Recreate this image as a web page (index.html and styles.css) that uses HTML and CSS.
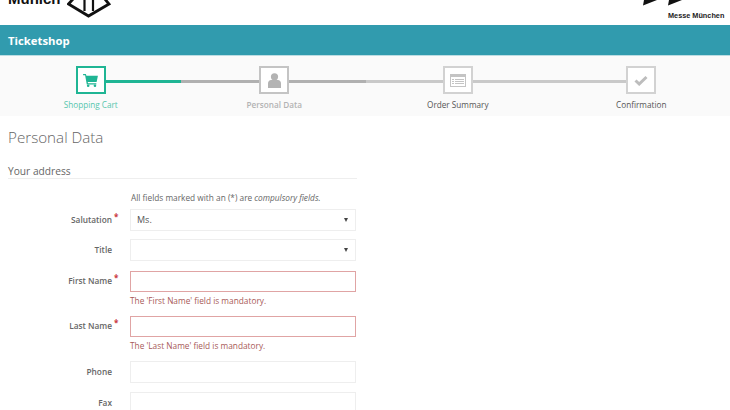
FILE: index.html
```html
<!DOCTYPE html>
<html lang="en">
<head>
<meta charset="utf-8">
<title>Ticketshop</title>
<link rel="stylesheet" href="styles.css">
</head>
<body>
<header class="top">
  <div class="brand">
    <span class="munich">Munich</span>
    <svg class="hex" width="44" height="18" viewBox="0 0 44 18"><path d="M7 -2L1.500 4L21.500 16L42 4L37 -2" fill="none" stroke="#111" stroke-width="2.800"/><path d="M17.500 -1V11M26 -1V11" stroke="#111" stroke-width="2.200"/></svg>
  </div>
  <div class="messe">
    <svg class="arrows" width="40" height="6" viewBox="0 0 40 6"><path d="M0 5.500L1 0H14Z M25 5.500L26 0H39Z" fill="#111"/></svg>
    <div class="messe-name">Messe München</div>
  </div>
</header>
<div class="bar">Ticketshop</div>
<nav class="steps">
  <div class="step done">
    <div class="box"><svg width="15" height="13" viewBox="0 0 16 14"><path d="M0 0h3l.6 2H16l-1.400 6.500H5l.3 1.500h9v1.300H4L2.200 1.400H0Z" fill="#1fb594"/><circle cx="5.500" cy="12.600" r="1.400" fill="#1fb594"/><circle cx="12.800" cy="12.600" r="1.400" fill="#1fb594"/></svg></div>
    <div class="label">Shopping Cart</div>
  </div>
  <div class="step current">
    <div class="box"><svg width="13" height="15" viewBox="0 0 13 15"><circle cx="6.500" cy="3.800" r="3.600" fill="#b3b3b3"/><path d="M0 15V10.500C0 8.500 1.500 7 3 7h7c1.500 0 3 1.500 3 3.500V15Z" fill="#b3b3b3"/></svg></div>
    <div class="label">Personal Data</div>
  </div>
  <div class="step todo">
    <div class="box"><svg width="16" height="13" viewBox="0 0 16 13"><rect x="0.500" y="0.500" width="15" height="12" fill="#fff" stroke="#c4c4c4"/><rect width="16" height="3" fill="#c4c4c4"/><path d="M2 5.500h2M5 5.500h9M2 7.500h2M5 7.500h9M2 9.500h2M5 9.500h9" stroke="#c4c4c4"/></svg></div>
    <div class="label">Order Summary</div>
  </div>
  <div class="step todo last">
    <div class="box"><svg width="14" height="11" viewBox="0 0 14 11"><path d="M1.500 5.500L5.200 9L12.500 2" fill="none" stroke="#bdbdbd" stroke-width="3"/></svg></div>
    <div class="label">Confirmation</div>
  </div>
</nav>
<main class="content">
  <h1>Personal Data</h1>
  <h2>Your address</h2>
  <form class="form">
    <p class="note">All fields marked with an (*) are <em>compulsory fields.</em></p>
    <div class="row first"><label class="req">Salutation</label><div class="control select">Ms.</div></div>
    <div class="row"><label>Title</label><div class="control select"></div></div>
    <div class="row wide"><label class="req">First Name</label><div class="control invalid"></div></div>
    <p class="error">The 'First Name' field is mandatory.</p>
    <div class="row"><label class="req">Last Name</label><div class="control invalid"></div></div>
    <p class="error">The 'Last Name' field is mandatory.</p>
    <div class="row"><label>Phone</label><div class="control"></div></div>
    <div class="row mid"><label>Fax</label><div class="control"></div></div>
  </form>
</main>
</body>
</html>
```
FILE: styles.css
```css
* { box-sizing: border-box; }
html, body { margin: 0; height: 410px; overflow: hidden; }
body { background: #fff; font-family: "Open Sans", sans-serif; color: #555; }

.top { height: 25px; display: flex; justify-content: space-between; overflow: hidden; padding: 0 4px 0 8px; }
.brand { display: flex; align-items: flex-start; gap: 6px; margin-top: -11px; height: 37px; }
.munich { font: bold 15px/20px "Liberation Sans", sans-serif; color: #111; }
.hex { margin-top: 11px; }
.messe { width: 58px; }
.arrows { display: block; margin: 0 0 5px -25px; }
.messe-name { font: bold 7.300px/9px "Liberation Sans", sans-serif; color: #222; white-space: nowrap; margin-top: -1px; padding-top: 1px; }

.bar { height: 31px; background: #319bae; color: #fff; font: bold 11.300px/31px "Open Sans", sans-serif; padding-left: 8px; border-bottom: 1px solid #bcdde3; }

.steps { height: 60px; background: #fafafa; display: grid; grid-template-columns: repeat(4, 183.500px); padding-top: 10px; margin-left: -1px; margin-right: -1px; }
.step { position: relative; display: flex; flex-direction: column; align-items: center; font-size: 8.200px; }
.step::before { content: ""; position: absolute; top: 14px; left: 91px; width: 183px; height: 3px; background: #c9c9c9; }
.step.last::before { display: none; }
.step.done::before { background: linear-gradient(90deg, #1fb594 50%, #b0b0b0 50%); }
.step.current::before { background: linear-gradient(90deg, #b0b0b0 50%, #c9c9c9 50%); }
.box { position: relative; width: 30px; height: 28px; border: 2px solid #d2d2d2; background: #fff; display: flex; align-items: center; justify-content: center; }
.done .box { border-color: #1fb594; }
.current .box { border-color: #c4c4c4; }
.label { margin-top: 4px; line-height: 14px; color: #555; }
.done .label { color: #56c6ad; }
.current .label { color: #b3b3b3; font-weight: 600; }

.content { padding: 0 8px; }
h1 { margin: 10px 0 0; font-size: 15.200px; line-height: 22px; font-weight: 300; color: #666; }
h2 { margin: 16px 0 0; width: 349px; font-size: 10.200px; line-height: 14px; font-weight: 400; color: #666; border-bottom: 1px solid #eee; }

.form { width: 348px; }
.note { margin: 12px 0 0 123px; font-size: 8.300px; line-height: 13px; color: #666; }
.row { display: flex; align-items: center; margin-top: 8px; height: 22px; }
.row.first { margin-top: 5px; }
.row.mid { margin-top: 9px; }
.row.wide { margin-top: 10px; }
.row:has(.invalid) { height: 21px; }
.row label { width: 104px; text-align: right; font-size: 8.300px; font-weight: 600; color: #666; margin-right: 18px; position: relative; top: -1px; }
.req::after { content: "*"; position: absolute; left: 100%; top: -3px; margin-left: 2px; color: #c9393f; font-size: 8px; font-weight: 700; }
.control { flex: 0 0 226px; height: 100%; border: 1px solid #eee; background: #fff; font-size: 9px; line-height: 20px; padding-left: 6px; color: #555; position: relative; }
.select::after { content: ""; position: absolute; right: 7px; top: 8px; border: 2.500px solid transparent; border-top: 4px solid #444; border-bottom: 0; }
.invalid { border-color: #e0a4a4; }
.error { margin: 2px 0 0 122px; font-size: 8.300px; line-height: 14px; color: #a85a58; }
```
